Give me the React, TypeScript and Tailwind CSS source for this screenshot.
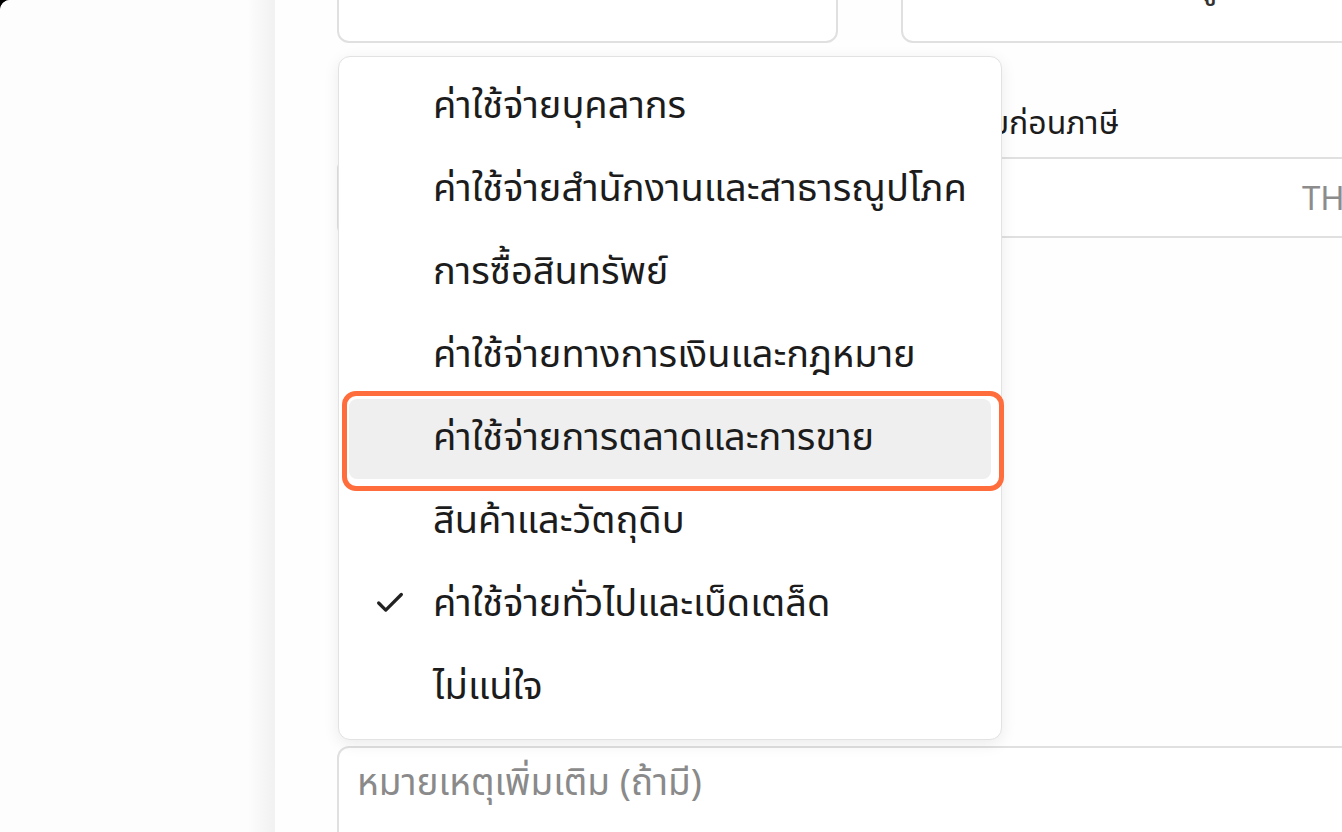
import { Check } from "lucide-react";

const options = [
  "ค่าใช้จ่ายบุคลากร",
  "ค่าใช้จ่ายสำนักงานและสาธารณูปโภค",
  "การซื้อสินทรัพย์",
  "ค่าใช้จ่ายทางการเงินและกฎหมาย",
  "ค่าใช้จ่ายการตลาดและการขาย",
  "สินค้าและวัตถุดิบ",
  "ค่าใช้จ่ายทั่วไปและเบ็ดเตล็ด",
  "ไม่แน่ใจ",
];

const HIGHLIGHT = 4;
const SELECTED = 6;

const font = "font-['Noto_Sans','Noto_Sans_Thai',sans-serif]";

function Dropdown() {
  return (
    <div className="absolute left-px top-[56px] z-10 h-[684px] w-[664px] overflow-visible rounded-[12px] border border-[#e2e2e2] bg-white pt-[8px] shadow-[0_4px_16px_rgba(0,0,0,0.08)]">
      {options.map((o, i) => (
        <div key={o} className="relative h-[83px] px-[10px] py-[2px]">
          <div
            className={`flex h-[80px] items-center rounded-[8px] ${
              i === HIGHLIGHT ? "bg-[#efefef]" : ""
            }`}
          >
            <span className="flex w-[84px] justify-end pr-[26px] pb-[4px]">
              {i === SELECTED && <Check className="h-[34px] w-[34px] text-[#222]" strokeWidth={2.3} />}
            </span>
            <span className={`${font} pb-[8px] text-[38px] leading-none text-[#1c1c1c]`}>{o}</span>
          </div>
          {i === HIGHLIGHT && (
            <span className="pointer-events-none absolute -top-[6px] -bottom-[11px] left-[3px] right-[-3px] rounded-[14px] border-[5px] border-[#ff6d3c]" />
          )}
        </div>
      ))}
    </div>
  );
}

export default function App() {
  return (
    <div className="h-[832px] w-[1342px] overflow-hidden bg-black">
      <div className="flex h-full overflow-hidden rounded-tl-[10px] bg-white">
        <aside className="w-[275px] shrink-0 bg-linear-to-r from-[#fdfdfd] from-90% to-[#f1f1f1]" />
        <main className="relative flex-1 overflow-hidden bg-[#fefefe] pl-[62px]">
          <div className="relative grid w-[1070px] grid-cols-[501px_506px] gap-x-[63px]">
            <div className="-mt-[47px] flex h-[90px] items-start justify-center rounded-[12px] border-2 border-[#e0e0e0] bg-white pt-[12px]">
              <span className={`${font} text-[34px] leading-none text-[#333]`}>ค่าใช้จ่ายทั่วไปและเบ็ดเตล็ด</span>
            </div>
            <div className="-mt-[47px] flex h-[90px] items-start justify-center rounded-[12px] border-2 border-[#e0e0e0] bg-white pt-[12px]">
              <span className={`${font} text-[34px] leading-none text-[#333]`}>เลือกหมวดหมู่ย่อย</span>
            </div>

            <div className="mt-[59px]">
              <div className={`${font} h-[40px] text-[32px] leading-[40px] text-[#1c1c1c]`}>หมวดหมู่ค่าใช้จ่าย</div>
              <div className="mt-[15px] h-[81px] rounded-[12px] border-2 border-[#e0e0e0]" />
            </div>
            <div className="mt-[59px]">
              <div className={`${font} h-[40px] text-[32px] leading-[40px] text-[#1c1c1c]`}>ยอดรวมก่อนภาษี</div>
              <div className="mt-[15px] flex h-[81px] items-center border-y-2 border-[#e0e0e0] bg-white pl-[401px]">
                <span className={`${font} text-[33px] text-[#8c8c8c]`}>THB</span>
              </div>
            </div>

            <div className="col-span-2 mt-[508px] h-[200px] rounded-tl-[12px] border-2 border-[#e0e0e0] bg-white px-[18px] pt-[14px]">
              <span className={`${font} text-[37px] leading-none text-[#8a8a8a]`}>หมายเหตุเพิ่มเติม (ถ้ามี)</span>
            </div>

            <Dropdown />
          </div>
        </main>
      </div>
    </div>
  );
}
